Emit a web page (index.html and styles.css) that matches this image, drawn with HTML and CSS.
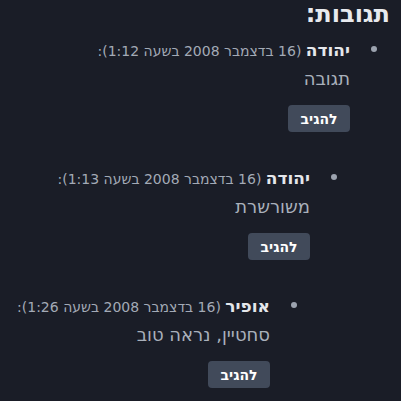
FILE: index.html
```html
<!DOCTYPE html>
<html lang="he" dir="rtl">
<head>
<meta charset="utf-8">
<link rel="stylesheet" href="styles.css">
</head>
<body>
<div class="page">
  <h2 class="title">תגובות:</h2>
  <ul class="comments">
    <li class="comment">
      <div class="meta"><b class="author">יהודה</b> (16 בדצמבר 2008 בשעה 1:12):</div>
      <p class="body">תגובה</p>
      <button class="reply">להגיב</button>
      <ul class="comments">
        <li class="comment">
          <div class="meta"><b class="author">יהודה</b> (16 בדצמבר 2008 בשעה 1:13):</div>
          <p class="body">משורשרת</p>
          <button class="reply">להגיב</button>
          <ul class="comments">
            <li class="comment">
              <div class="meta"><b class="author">אופיר</b> (16 בדצמבר 2008 בשעה 1:26):</div>
              <p class="body">סחטיין, נראה טוב</p>
              <button class="reply">להגיב</button>
            </li>
          </ul>
        </li>
      </ul>
    </li>
  </ul>
</div>
</body>
</html>
```
FILE: styles.css
```css
html, body {
  margin: 0;
  padding: 0;
  background: #1a1d27;
}
body {
  font-family: "DejaVu Sans", sans-serif;
  color: #e5e7eb;
}
.page {
  padding: 0 11px 0 0;
}
.title {
  margin: 0 0 4px 0;
  font-size: 24px;
  font-weight: bold;
  line-height: 28px;
  color: #e8eaee;
}
.comments {
  list-style: none;
  margin: 0;
  padding: 0 40px 0 0;
}
.comment {
  position: relative;
}
.comment::before {
  content: "";
  position: absolute;
  right: -27px;
  top: 14px;
  width: 6px;
  height: 6px;
  border-radius: 50%;
  background: #9ca3af;
}
.meta {
  font-size: 14px;
  line-height: 20px;
  padding-top: 8px;
  color: #a3aab6;
}
.author {
  font-size: 17px;
  color: #e5e7eb;
}
.body {
  margin: 8px 0 0 0;
  font-size: 18px;
  line-height: 20px;
  color: #a9b0bb;
}
.reply {
  display: block;
  margin-top: 16px;
  width: 62px;
  height: 27px;
  padding: 0;
  border: none;
  border-radius: 4px;
  background: #414a5a;
  color: #ffffff;
  font-family: "DejaVu Sans", sans-serif;
  font-size: 14px;
  font-weight: bold;
}
.comment .comments {
  margin-top: 28px;
}
```
